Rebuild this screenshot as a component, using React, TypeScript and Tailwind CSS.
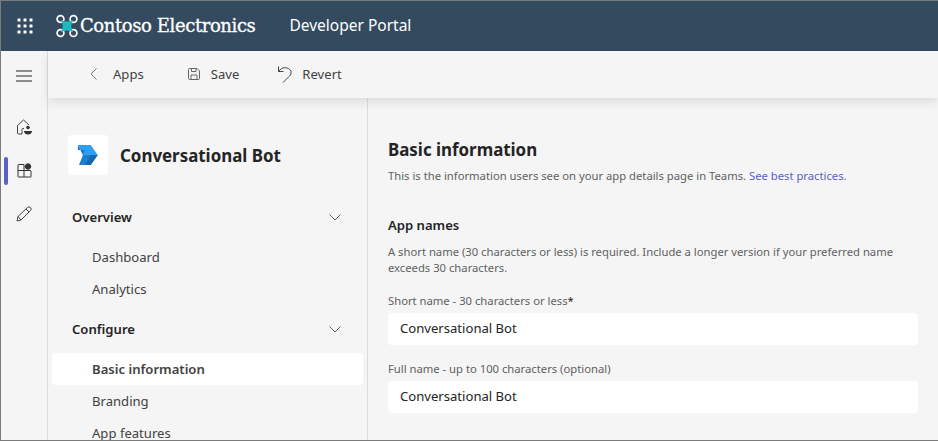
import React from "react";

const Waffle = () => (
  <svg width="16" height="16" viewBox="0 0 16 16" fill="#fff">
    {[0.5, 6.5, 12.5].flatMap((y) =>
      [0.5, 6.5, 12.5].map((x) => <rect key={`${x}-${y}`} x={x} y={y} width="3" height="3" rx="0.5" />)
    )}
  </svg>
);

const Drone = () => (
  <svg width="22" height="24" viewBox="0 0 22 24" fill="none">
    <g stroke="#fff" strokeWidth="1.7" fill="none">
      <circle cx="4.5" cy="5" r="3.4" />
      <circle cx="17.5" cy="5" r="3.4" />
      <circle cx="4.5" cy="19" r="3.4" />
      <circle cx="17.5" cy="19" r="3.4" />
    </g>
    <path d="M5 6 Q11 9 17 6 Q13.5 12 17 18 Q11 15 5 18 Q8.5 12 5 6 Z" fill="#22b8bd" />
  </svg>
);

const Hamburger = () => (
  <svg width="16" height="12" viewBox="0 0 16 12" stroke="#242424" strokeWidth="1.1">
    <path d="M0 1 H16 M0 6 H16 M0 11 H16" />
  </svg>
);

const HomeIcon = () => (
  <svg width="16" height="16" viewBox="0 0 16 16" fill="none">
    <path d="M6 15 H2.5 A1 1 0 0 1 1.5 14 V6.5 L7.5 1 L13 6" stroke="#444" strokeWidth="1" />
    <path d="M6 15 V10.5 A1 1 0 0 1 7 9.5 H8" stroke="#444" strokeWidth="1" />
    <circle cx="12" cy="8.5" r="1.8" fill="#333" />
    <path d="M8 12 H16 C16 14.5 14 15.5 12 15.5 C10 15.5 8 14.5 8 12 Z" fill="#333" />
  </svg>
);

const AppsIcon = () => (
  <svg width="15" height="15" viewBox="0 0 15 15" fill="none">
    <path d="M7 1.5 H1.5 A0.5 0.5 0 0 0 1 2 V13.5 A0.5 0.5 0 0 0 1.5 14 H13.5 A0.5 0.5 0 0 0 14 13.5 V8 M1 7.5 H14 M7 1.5 V14" stroke="#333" strokeWidth="1" />
    <path d="M11 0 L14.5 3.5 L11 7 L7.5 3.5 Z" fill="#333" />
    <circle cx="11" cy="3.5" r="3" fill="#333" />
  </svg>
);

const Pencil = () => (
  <svg width="16" height="16" viewBox="0 0 16 16" fill="none" stroke="#444" strokeWidth="1">
    <path d="M1 15 L2 10.5 L11.5 1.5 A1.8 1.8 0 0 1 14.5 4.5 L5 14 Z M10 3 L13 6 M2 10.5 L5 14" />
  </svg>
);

const Chevron = () => (
  <svg width="12" height="7" viewBox="0 0 12 7" fill="none" stroke="#666" strokeWidth="1">
    <path d="M0.5 0.5 L6 6 L11.5 0.5" />
  </svg>
);

const Back = () => (
  <svg width="7" height="12" viewBox="0 0 7 12" fill="none" stroke="#777" strokeWidth="1">
    <path d="M6.5 0.5 L1 6 L6.5 11.5" />
  </svg>
);

const SaveIcon = () => (
  <svg width="12" height="12" viewBox="0 0 12 12" fill="none" stroke="#666" strokeWidth="1">
    <path d="M1.5 0.5 H9 L11.5 3 V10.5 A1 1 0 0 1 10.5 11.5 H1.5 A1 1 0 0 1 0.5 10.5 V1.5 A1 1 0 0 1 1.5 0.5 Z" />
    <path d="M3.5 0.5 V3.5 H8 V0.5 M3 11.5 V7 H9 V11.5" />
  </svg>
);

const RevertIcon = () => (
  <svg width="14" height="17" viewBox="0 0 14 17" fill="none" stroke="#444" strokeWidth="1">
    <path d="M0.5 0.5 V5.5 H5.5" />
    <path d="M0.5 5.5 L3.5 2.5 C6 1 12 1.5 13 5.5 C13.5 8 12 10 10.5 11 L5 16.5" />
  </svg>
);

const BotLogo = () => (
  <svg width="20" height="20" viewBox="0 0 20 20">
    <path d="M0 0 H12.7 L19.7 10 H5 Z" fill="#2f9df0" />
    <path d="M0 0 L5 10 L6.5 5 L0 5 Z" fill="#1b75c4" />
    <path d="M5 10 H19.7 L12.7 20 H1 Z" fill="#1b80d2" />
    <path d="M7 20 L13 10 H19.7 L12.7 20 Z" fill="#1567ae" />
  </svg>
);

const SectionHead = ({ label }: { label: string }) => (
  <div className="flex h-8 items-center justify-between pl-5 pr-[22px] text-[13.1px] font-semibold text-[#242424]">
    <span className="mt-[2px]">{label}</span>
    <Chevron />
  </div>
);

const NavItem = ({ label, active }: { label: string; active?: boolean }) => (
  <div className={`flex h-8 shrink-0 items-center rounded pl-10 pt-[2px] text-[13.1px] ${active ? "bg-white font-semibold text-[#424242]" : "text-[#424242]"}`}>
    {label}
  </div>
);

const ToolItem = ({ icon, label, gap }: { icon: React.ReactNode; label: string; gap: string }) => (
  <div className={`flex items-center ${gap} text-[13.1px] text-[#424242]`}>
    {icon}
    <span>{label}</span>
  </div>
);

const Field = ({ label, star }: { label: string; star?: boolean }) => (
  <div className="flex flex-col">
    <div className="flex h-4 items-center text-[11.25px] text-[#616161]">
      {label}
      {star && <span className="text-[#242424]">*</span>}
    </div>
    <div className="mt-1 flex h-8 items-center rounded bg-white pl-3 text-[13.1px] text-[#242424]">Conversational Bot</div>
  </div>
);

export default function App() {
  return (
    <div
      className="flex h-[441px] w-[938px] flex-col overflow-hidden border-t border-b border-l border-[#7a7a7a] bg-[#f5f5f5]"
      style={{ fontFamily: '"Noto Sans", "Open Sans", sans-serif' }}
    >
      <header className="flex h-[50px] shrink-0 items-center bg-[#344a5f] text-white">
        <div className="flex w-[47px] justify-center"><Waffle /></div>
        <div className="ml-[8px] flex items-center gap-[2px]">
          <Drone />
          <span className="text-[18px] leading-none tracking-[-0.4px] [-webkit-text-stroke:0.3px_white]" style={{ fontFamily: '"DejaVu Serif", serif' }}>Contoso Electronics</span>
        </div>
        <span className="ml-[34px] text-[15.5px]">Developer Portal</span>
      </header>
      <div className="flex min-h-0 flex-1">
        <aside className="flex w-[47px] shrink-0 flex-col items-center border-r border-[#dcdcdc] pt-[19px]">
          <Hamburger />
          <div className="mt-[37px]"><HomeIcon /></div>
          <div className="relative mt-[28px] flex w-full justify-center">
            <div className="absolute left-[3px] top-[-6px] h-7 w-1 rounded bg-[#5b5fc7]" />
            <AppsIcon />
          </div>
          <div className="mt-[28px]"><Pencil /></div>
        </aside>
        <div className="flex min-w-0 flex-1 flex-col">
          <div className="relative z-10 flex h-[47px] shrink-0 items-center bg-[#f5f5f5] pl-[42px] shadow-[0_4px_10px_rgba(0,0,0,0.1)]">
            <ToolItem icon={<Back />} label="Apps" gap="gap-[16px]" />
            <div className="ml-[44px]"><ToolItem icon={<SaveIcon />} label="Save" gap="gap-[11px]" /></div>
            <div className="ml-[39px]"><ToolItem icon={<RevertIcon />} label="Revert" gap="gap-[10px]" /></div>
          </div>
          <div className="flex min-h-0 flex-1">
            <nav className="flex w-[320px] shrink-0 flex-col overflow-hidden border-r border-[#dcdcdc] pl-1 pr-1 pt-[37px]">
              <div className="flex items-center pl-4">
                <div className="flex h-10 w-10 items-center justify-center rounded bg-white"><BotLogo /></div>
                <span className="ml-3 mt-[2px] text-[16.9px] font-bold text-[#242424]">Conversational Bot</span>
              </div>
              <div className="mt-[26px]"><SectionHead label="Overview" /></div>
              <div className="mt-2"><NavItem label="Dashboard" /></div>
              <NavItem label="Analytics" />
              <div className="mt-2"><SectionHead label="Configure" /></div>
              <div className="mt-2"><NavItem label="Basic information" active /></div>
              <NavItem label="Branding" />
              <NavItem label="App features" />
            </nav>
            <main className="flex min-w-0 flex-1 flex-col pl-5 pr-5 pt-[40px]">
              <h1 className="h-6 text-[16.9px] font-bold leading-6 text-[#242424]">Basic information</h1>
              <p className="mt-[6px] text-[11.25px] leading-4 text-[#616161]">
                This is the information users see on your app details page in Teams. <span className="text-[#5b5fc7]">See best practices.</span>
              </p>
              <h2 className="mt-[31px] h-5 text-[13.1px] font-semibold leading-5 text-[#242424]">App names</h2>
              <p className="mt-[9px] text-[11.25px] leading-4 text-[#616161]">
                A short name (30 characters or less) is required. Include a longer version if your preferred name<br />exceeds 30 characters.
              </p>
              <div className="mt-[17px] flex flex-col gap-4">
                <Field label="Short name - 30 characters or less" star />
                <Field label="Full name - up to 100 characters (optional)" />
              </div>
            </main>
          </div>
        </div>
      </div>
    </div>
  );
}
